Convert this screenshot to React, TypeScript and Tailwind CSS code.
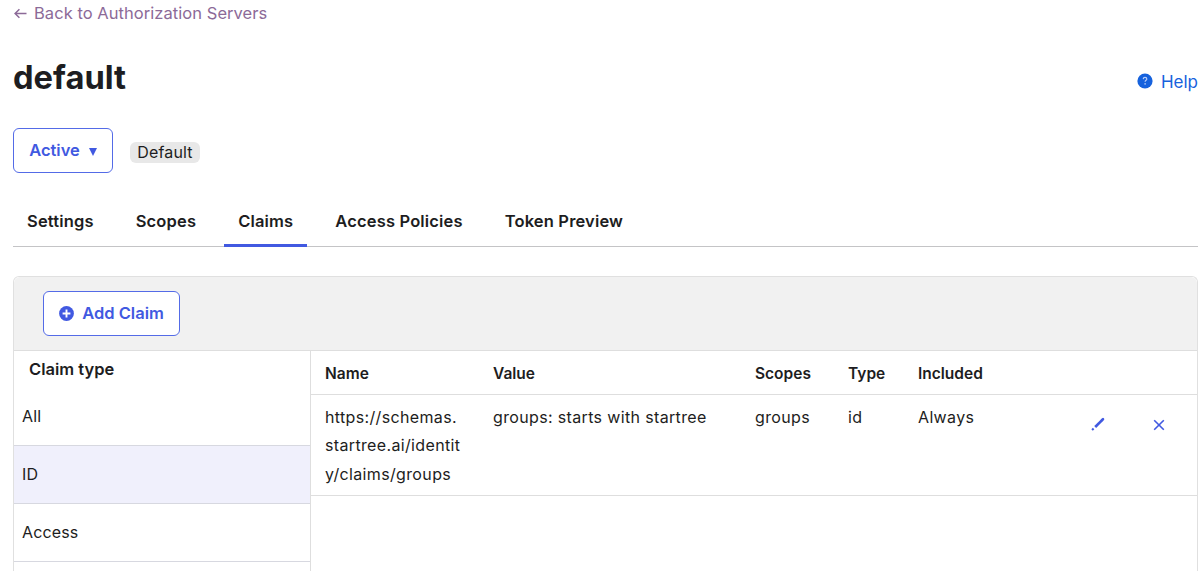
import { clsx } from 'clsx'

type Claim = {
  name: string[]
  value: string
  scopes: string
  type: string
  included: string
}

const tabs = ['Settings', 'Scopes', 'Claims', 'Access Policies', 'Token Preview']

const claimTypes = ['All', 'ID', 'Access']

const claims: Claim[] = [
  {
    name: ['https://schemas.', 'startree.ai/identit', 'y/claims/groups'],
    value: 'groups: starts with startree',
    scopes: 'groups',
    type: 'id',
    included: 'Always',
  },
]

const columns = 'grid grid-cols-[168px_262px_93px_70px_173px_62px_1fr] pl-[14px]'

function BackArrow() {
  return (
    <svg width="13" height="11" viewBox="0 0 13 11" fill="none" stroke="currentColor" strokeWidth="1.5">
      <path d="M12.5 5.5H1.2M5.4 1.2L1.1 5.5l4.3 4.3" />
    </svg>
  )
}

function PlusCircle() {
  return (
    <svg width="15" height="15" viewBox="0 0 15 15">
      <circle cx="7.5" cy="7.5" r="7.4" fill="currentColor" />
      <path d="M7.5 3.6v7.8M3.6 7.5h7.8" stroke="white" strokeWidth="1.9" />
    </svg>
  )
}

function HelpCircle() {
  return (
    <svg width="16" height="16" viewBox="0 0 16 16">
      <circle cx="8" cy="8" r="7.6" fill="currentColor" />
      <path d="M6.2 6.1c.1-1.1.8-1.7 1.8-1.7s1.8.6 1.8 1.5c0 1.3-1.7 1.3-1.7 2.8" fill="none" stroke="#b9cdf8" strokeWidth="1.2" />
      <circle cx="8.1" cy="10.9" r=".8" fill="#b9cdf8" />
    </svg>
  )
}

function Pencil() {
  return (
    <svg width="14" height="14" viewBox="0 0 14 14" fill="none" stroke="currentColor">
      <path d="M4.2 10l7.4-7.4" strokeWidth="2.6" />
      <path d="M11 3.2l1-1" strokeWidth="2.6" strokeLinecap="round" />
      <path d="M1.1 13l1.5-1.5" strokeWidth="2" />
    </svg>
  )
}

function Cross() {
  return (
    <svg width="12" height="12" viewBox="0 0 12 12" fill="none" stroke="currentColor" strokeWidth="1.6">
      <path d="M1.2 1.2l9.6 9.6M10.8 1.2L1.2 10.8" />
    </svg>
  )
}

export default function App() {
  return (
    <div className="h-[572px] overflow-hidden bg-white pl-[13px] pr-1 font-['Inter',sans-serif] text-base text-[#1d1d21]">
      <a href="#" className="ml-px flex h-[27px] items-center gap-[7px] text-[#8c6a98]">
        <BackArrow />
        <span className="text-[16.5px] tracking-[0.05px]">Back to Authorization Servers</span>
      </a>

      <div className="mt-[27px] flex h-12 items-center justify-between">
        <h1 className="text-[32.7px] font-bold">default</h1>
        <a href="#" className="mt-[9px] flex items-center gap-2 text-[#1662dd]">
          <span className="mb-[3px]">
            <HelpCircle />
          </span>
          <span className="text-[17px]">Help</span>
        </a>
      </div>

      <div className="mt-[26px] flex h-[45px] items-center">
        <button className="flex h-[45px] w-[100px] items-center justify-center gap-[9px] rounded-md border-[1.5px] border-[#546be7] font-semibold text-[#4159e1]">
          <span className="text-[16.5px]">Active</span>
          <svg width="8" height="8" viewBox="0 0 8 8" fill="currentColor" className="mt-[2px]">
            <path d="M0 0h8L4 8z" />
          </svg>
        </button>
        <span className="ml-[17px] mt-1 flex h-[21px] w-[70px] items-center justify-center rounded-md bg-[#e8e8e8] pb-px text-[16px] tracking-[0.15px]">
          Default
        </span>
      </div>

      {/* Tabs */}
      <div className="mt-6 flex h-[50px] gap-[14px] border-b border-[#c4c4c6]">
        {tabs.map((tab) => (
          <button
            key={tab}
            className={clsx(
              '-mb-px h-[50px] border-b-[3px] px-[14px] pt-[2px] text-[16.5px] font-semibold tracking-[0.16px]',
              tab === 'Claims' ? 'border-[#4159e1]' : 'border-transparent',
            )}
          >
            {tab}
          </button>
        ))}
      </div>

      <div className="mt-[29px] flex h-[295px] flex-col rounded-t-md border border-b-0 border-[#e0e0e0]">
        <div className="flex h-[74px] shrink-0 items-center rounded-t-md border-b border-[#dedede] bg-[#f1f1f1] pl-[29px]">
          <button className="flex h-[45px] w-[137px] items-center justify-center gap-2 rounded-md border-[1.5px] border-[#546be7] bg-white font-semibold text-[#4159e1]">
            <PlusCircle />
            <span className="text-[16.5px]">Add Claim</span>
          </button>
        </div>

        <div className="flex flex-1">
          {/* Claim types */}
          <div className="w-[297px] shrink-0 border-r border-[#dedede]">
            <h2 className="h-[37px] pl-[15px] pt-[6px] text-[16.5px] font-semibold">Claim type</h2>
            {claimTypes.map((type) => (
              <div
                key={type}
                className={clsx(
                  'flex h-[58px] items-center border-b border-[#d7d8e0] pb-[2px] pl-2 text-[16px] tracking-[0.15px]',
                  type === 'ID' && 'bg-[#f0f0fc]',
                )}
              >
                {type}
              </div>
            ))}
          </div>

          <div className="flex-1">
            <div className={clsx(columns, 'h-11 items-center border-b border-[#dedede] pt-[2px] text-[15.5px] font-semibold')}>
              <span>Name</span>
              <span>Value</span>
              <span>Scopes</span>
              <span>Type</span>
              <span>Included</span>
            </div>
            {claims.map((claim) => (
              <div
                key={claim.value}
                className={clsx(columns, 'h-[101px] border-b border-[#dedede] pt-2 text-[16px] leading-[28.3px] tracking-[0.35px]')}
              >
                <div>
                  {claim.name.map((line) => (
                    <div key={line}>{line}</div>
                  ))}
                </div>
                <span>{claim.value}</span>
                <span>{claim.scopes}</span>
                <span>{claim.type}</span>
                <span>{claim.included}</span>
                <button className="mt-[14px] h-[14px] text-[#4159e1]">
                  <Pencil />
                </button>
                <button className="mt-4 h-3 text-[#4159e1]">
                  <Cross />
                </button>
              </div>
            ))}
          </div>
        </div>
      </div>
    </div>
  )
}
